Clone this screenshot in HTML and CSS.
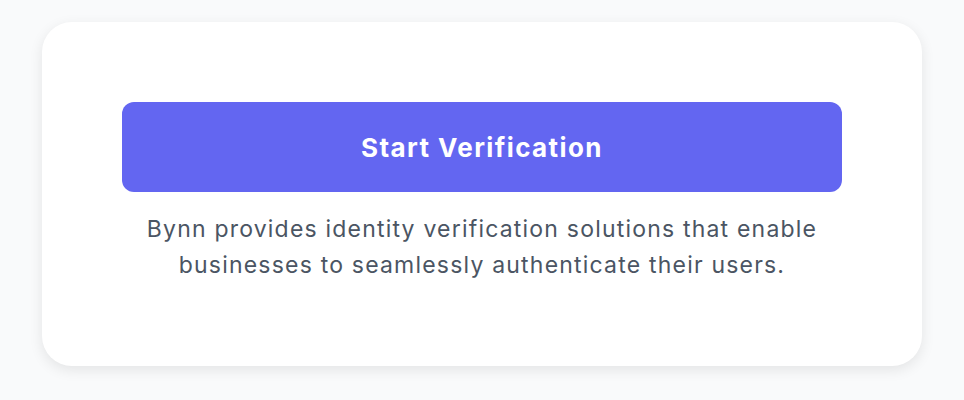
FILE: index.html
```html
<!DOCTYPE html>
<html>
<head>
<meta charset="utf-8">
<link rel="stylesheet" href="styles.css">
</head>
<body>
<div class="page">
  <div class="card">
    <button class="btn">Start Verification</button>
    <p class="desc">Bynn provides identity verification solutions that enable businesses to seamlessly authenticate their users.</p>
  </div>
</div>
</body>
</html>
```
FILE: styles.css
```css
html, body {
  margin: 0;
  padding: 0;
  background: #f9fafb;
  font-family: Inter, "Noto Sans", sans-serif;
}
.page {
  padding: 22px 42px;
}
.card {
  background: #ffffff;
  border-radius: 30px;
  box-shadow: 0 4px 14px rgba(0, 0, 0, 0.09);
  padding: 80px 80px 83px;
  display: flex;
  flex-direction: column;
  align-items: stretch;
}
.btn {
  height: 90px;
  border: none;
  border-radius: 12px;
  background: #6366f1;
  color: #ffffff;
  font-family: Inter, "Noto Sans", sans-serif;
  font-weight: 700;
  font-size: 26px;
  letter-spacing: 1.4px;
  cursor: pointer;
}
.desc {
  margin: 19px 0 0;
  text-align: center;
  color: #4b5563;
  font-size: 23px;
  letter-spacing: 1.2px;
  line-height: 36px;
}
```
